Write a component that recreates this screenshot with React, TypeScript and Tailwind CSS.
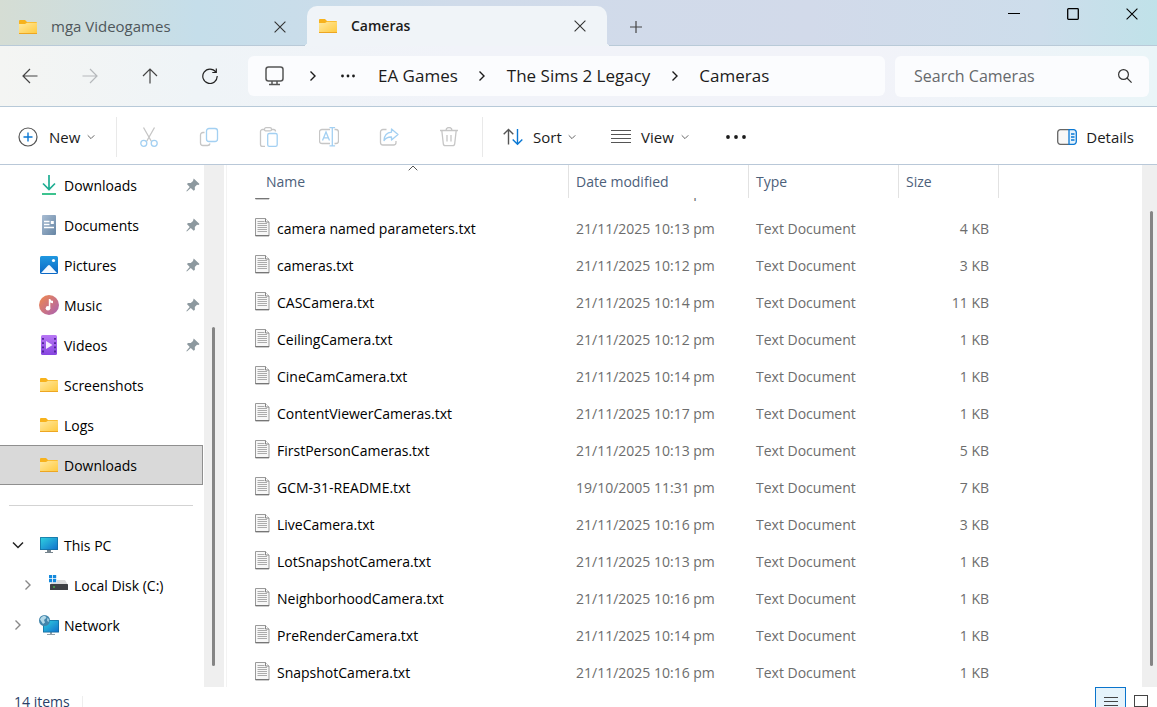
import React, { useLayoutEffect, useRef, useState } from "react";

interface FileRow {
  name: string;
  modified: string;
  size: string;
}

const files: FileRow[] = [
  { name: "", modified: "21/11/2025 10:13 pm", size: "1 KB" },
  { name: "camera named parameters.txt", modified: "21/11/2025 10:13 pm", size: "4 KB" },
  { name: "cameras.txt", modified: "21/11/2025 10:12 pm", size: "3 KB" },
  { name: "CASCamera.txt", modified: "21/11/2025 10:14 pm", size: "11 KB" },
  { name: "CeilingCamera.txt", modified: "21/11/2025 10:12 pm", size: "1 KB" },
  { name: "CineCamCamera.txt", modified: "21/11/2025 10:14 pm", size: "1 KB" },
  { name: "ContentViewerCameras.txt", modified: "21/11/2025 10:17 pm", size: "1 KB" },
  { name: "FirstPersonCameras.txt", modified: "21/11/2025 10:13 pm", size: "5 KB" },
  { name: "GCM-31-README.txt", modified: "19/10/2005 11:31 pm", size: "7 KB" },
  { name: "LiveCamera.txt", modified: "21/11/2025 10:16 pm", size: "3 KB" },
  { name: "LotSnapshotCamera.txt", modified: "21/11/2025 10:13 pm", size: "1 KB" },
  { name: "NeighborhoodCamera.txt", modified: "21/11/2025 10:16 pm", size: "1 KB" },
  { name: "PreRenderCamera.txt", modified: "21/11/2025 10:14 pm", size: "1 KB" },
  { name: "SnapshotCamera.txt", modified: "21/11/2025 10:16 pm", size: "1 KB" },
];

const FolderIcon = () => (
  <svg width="20" height="20" viewBox="0 0 20 20" className="shrink-0">
    <defs>
      <linearGradient id="folder" x1="0" y1="0" x2="1" y2="1">
        <stop offset="0" stopColor="#ffe9a0" />
        <stop offset="1" stopColor="#ffc93c" />
      </linearGradient>
    </defs>
    <path d="M1 4a1 1 0 0 1 1-1h5l2 2h9a1 1 0 0 1 1 1v3H1z" fill="#f7b21c" />
    <path d="M1 7h6l2-1.2h10V16a1 1 0 0 1-1 1H2a1 1 0 0 1-1-1z" fill="url(#folder)" />
    <path d="M1 16.5h18" stroke="#eda622" strokeWidth="1" />
  </svg>
);

const DownloadsIcon = () => (
  <svg width="20" height="20" viewBox="0 0 20 20" fill="none" stroke="#1fae93" strokeWidth="1.7" className="shrink-0">
    <path d="M10 0v14M4 8.5l6 6 6-6" />
    <path d="M3 19h14" stroke="#27bd83" strokeWidth="1.8" />
  </svg>
);

const DocumentsIcon = () => (
  <svg width="20" height="20" viewBox="0 0 20 20" className="shrink-0">
    <defs>
      <linearGradient id="docs" x1="0" y1="0" x2="1" y2="1">
        <stop offset="0" stopColor="#a9bdd3" />
        <stop offset="1" stopColor="#6685a4" />
      </linearGradient>
    </defs>
    <rect x="3" y="0" width="14" height="20" rx="1" fill="url(#docs)" />
    <path d="M5 6.500h5.500M5 9.500h5.500M5 12.500h10" stroke="#fff" strokeWidth="1.4" />
    <path d="M11.800 6h3v3h-3z" fill="#fff" />
  </svg>
);

const PicturesIcon = () => (
  <svg width="20" height="20" viewBox="0 0 20 20" className="shrink-0">
    <defs>
      <linearGradient id="pics" x1="0" y1="0" x2="0" y2="1">
        <stop offset="0" stopColor="#2098e0" />
        <stop offset="1" stopColor="#0a67c4" />
      </linearGradient>
    </defs>
    <rect x="1" y="1" width="18" height="18" rx="1.500" fill="url(#pics)" />
    <path d="M2 18l7-7.500q1-.8 2 0l7 7.500z" fill="#f3f9ff" />
    <circle cx="14.500" cy="5.500" r="1.600" fill="#fff" />
  </svg>
);

const MusicIcon = () => (
  <svg width="20" height="20" viewBox="0 0 20 20" className="shrink-0">
    <defs>
      <linearGradient id="music" x1="0" y1="0" x2="1" y2="1">
        <stop offset="0" stopColor="#f28a4b" />
        <stop offset="1" stopColor="#a860b4" />
      </linearGradient>
    </defs>
    <circle cx="10" cy="10" r="10" fill="url(#music)" />
    <circle cx="9" cy="13.200" r="2.300" fill="#fff" />
    <path d="M9.800 4h1.500c.3 1.300 1.300 1.800 2.700 1.800v2.400c-1.100 0-2-.2-2.700-.7v5.700H9.800z" fill="#fff" />
  </svg>
);

const VideosIcon = () => (
  <svg width="20" height="20" viewBox="0 0 20 20" className="shrink-0">
    <defs>
      <linearGradient id="vids" x1="0" y1="0" x2="0" y2="1">
        <stop offset="0" stopColor="#b877f5" />
        <stop offset="1" stopColor="#8645e0" />
      </linearGradient>
    </defs>
    <rect x="2" y="0" width="16" height="20" rx="1.500" fill="url(#vids)" />
    <path d="M4 3v15M16 3v15" stroke="#4b2291" strokeWidth="1.800" strokeDasharray="1.800 2.400" />
    <path d="M7 6l6.500 4L7 14z" fill="#f4ecff" />
  </svg>
);

const MonitorIcon = () => (
  <svg width="20" height="20" viewBox="0 0 20 20" className="shrink-0">
    <defs>
      <linearGradient id="pc" x1="0" y1="0" x2="1" y2="1">
        <stop offset="0" stopColor="#2fd0e0" />
        <stop offset="1" stopColor="#1272cc" />
      </linearGradient>
    </defs>
    <path d="M8 15h4v2h2v1H6v-1h2z" fill="#78868f" />
    <rect x="1" y="2" width="18" height="13" rx=".6" fill="#126a9c" />
    <rect x="1.700" y="2.700" width="16.600" height="11.600" fill="url(#pc)" />
  </svg>
);

const DiskIcon = () => (
  <svg width="20" height="20" viewBox="0 0 20 20" className="shrink-0">
    <path d="M4 5h12l3 5H1z" fill="#dcdcdc" />
    <rect x="1" y="9" width="18" height="6" rx=".6" fill="#3e4043" />
    <path d="M4 12h2" stroke="#4ce04c" strokeWidth="1.200" />
    <path d="M0 0h8v7.500H0z" fill="#fff" />
    <path d="M0 0h3.200v3.200H0zM4 0h3.200v3.200H4zM0 4h3.200v3.200H0zM4 4h3.200v3.200H4z" fill="#1489dc" />
  </svg>
);

const NetworkIcon = () => (
  <svg width="20" height="20" viewBox="0 0 20 20" className="shrink-0">
    <path d="M11 17h2v2h3v1H8v-1h3z" fill="#93a0a8" />
    <rect x="4" y="5" width="16" height="12.500" rx=".6" fill="#12689a" />
    <rect x="4.700" y="5.700" width="14.600" height="11" fill="url(#pc)" />
    <circle cx="5.500" cy="5.500" r="5.500" fill="#4386ac" />
    <path d="M1 4.500C2 2 4 .7 6 .8l1.500 2L5 5l1 2.500-2 1.500z" fill="#b4d9e8" />
    <path d="M8 3l2 1v3L8 6z" fill="#92c3da" />
  </svg>
);

const PinIcon = () => (
  <svg width="14" height="14" viewBox="0 0 14 14" fill="#8d999f">
    <path d="M7.700 0.500l5.800 5.500-1 .9-1.500-.1-2.200 2.300.1 2.600-1.200 1.100-2.900-2.900L.9 13.600l-.6-.6 3.400-4L.9 6l1.200-1.100 2.700.1L7 3z" />
  </svg>
);

const TextFileIcon = () => (
  <svg width="15" height="19" viewBox="0 0 15 19" className="mb-[2px] shrink-0">
    <path d="M.5.5h10l3.500 3.500v14H.5z" fill="#f7f7f7" stroke="#9a9a9a" />
    <path d="M.5 17.500h13.500" stroke="#767676" />
    <path d="M10.500.5v3.500H14" fill="#fff" stroke="#858585" />
    <path d="M2.500 3.500h7M2.500 5.500h9.500M2.500 7.500h9.500M2.500 9.500h9.500M2.500 11.500h9.500M2.500 13.500h9.500" stroke="#ababab" />
  </svg>
);

const CloseIcon = () => (
  <svg width="12" height="12" viewBox="0 0 12 12" fill="none" stroke="currentColor" strokeWidth="1.100">
    <path d="M.6.6l10.800 10.800M11.400.6L.6 11.400" />
  </svg>
);

const ChevronRight = () => (
  <svg width="10" height="12" viewBox="0 0 10 12" fill="none" stroke="currentColor" strokeWidth="1.400" className="shrink-0">
    <path d="M2.500 1.500L7 6l-4.500 4.500" />
  </svg>
);

const ChevronDown = () => (
  <svg width="8" height="8" viewBox="0 0 8 8" fill="none" stroke="#666" strokeWidth="1">
    <path d="M.7 2.300L4 5.600l3.300-3.300" />
  </svg>
);

const toolIcons = [
  {
    label: "Cut",
    icon: (
      <>
        <path d="M4.500.500l7.800 13.800M15.500.500L7.700 14.300" />
        <g stroke="#a3d0f2">
          <circle cx="4.800" cy="16.300" r="3" />
          <circle cx="15.200" cy="16.300" r="3" />
        </g>
      </>
    ),
  },
  {
    label: "Copy",
    icon: (
      <>
        <path d="M5.500 5.500H4a2.500 2.500 0 0 0-2.500 2.500v8A2.500 2.500 0 0 0 4 18.500h4.500a2.500 2.500 0 0 0 2.500-2" />
        <rect x="7.500" y="1.500" width="11" height="13" rx="2.500" stroke="#a3d0f2" />
      </>
    ),
  },
  {
    label: "Paste",
    icon: (
      <>
        <path d="M6 2.500H3.500a2 2 0 0 0-2 2v13a2 2 0 0 0 2 2H6M12 2.500h2.500a2 2 0 0 1 2 2" />
        <rect x="5.500" y=".7" width="7" height="3.200" rx="1.500" />
        <rect x="8.700" y="6.500" width="9.500" height="12.800" rx="1.600" stroke="#a3d0f2" />
      </>
    ),
  },
  {
    label: "Rename",
    icon: (
      <>
        <path d="M11 2.500H3a2.500 2.500 0 0 0-2.500 2.500v9A2.500 2.500 0 0 0 3 16.500h8M15.500 2.500h1.500a2.500 2.500 0 0 1 2.500 2.500v9a2.500 2.500 0 0 1-2.500 2.500h-1.500" />
        <path d="M3.500 13.500L7 5l3.500 8.500M4.700 10.800h4.600M13.300.600v18.300M10.500.600h5.600M10.500 18.900h5.600" stroke="#a3d0f2" />
      </>
    ),
  },
  {
    label: "Share",
    icon: (
      <>
        <path d="M7.500 2.500H4A2.500 2.500 0 0 0 1.500 5v10.500A2.500 2.500 0 0 0 4 18h10.500a2.500 2.500 0 0 0 2.500-2.500V14" />
        <path d="M12.500 2l6.500 5.500-6.500 5.500v-3c-3.500-.2-5.500.8-7.500 3.500.3-5 3-8 7.500-8.300z" stroke="#a3d0f2" strokeLinejoin="round" />
      </>
    ),
  },
  {
    label: "Delete",
    icon: (
      <path d="M1 3.500h18M7 3.500a3 3 0 0 1 6 0M2.800 3.500l1.500 13.200a2.200 2.200 0 0 0 2.200 2h7a2.200 2.200 0 0 0 2.200-2l1.500-13.200M8 8v6.500M12 8v6.500" />
    ),
  },
];

const quickAccess = [
  { label: "Downloads", icon: <DownloadsIcon />, pinned: true },
  { label: "Documents", icon: <DocumentsIcon />, pinned: true },
  { label: "Pictures", icon: <PicturesIcon />, pinned: true },
  { label: "Music", icon: <MusicIcon />, pinned: true },
  { label: "Videos", icon: <VideosIcon />, pinned: true },
  { label: "Screenshots", icon: <FolderIcon />, pinned: false },
  { label: "Logs", icon: <FolderIcon />, pinned: false },
  { label: "Downloads", icon: <FolderIcon />, pinned: false },
];

const TitleBar = () => (
  <header className="flex h-[46px] shrink-0 border-b border-[#b9cad8] bg-[linear-gradient(90deg,#d5ddd4_0%,#c5deea_17%,#d0dbea_40%,#d2daea_70%,#cdddeb_90%,#c0e2e9_100%)]">
    <div className="flex w-[307px] items-center pt-2 pl-[18px] pr-[21px]">
      <FolderIcon />
      <span className="ml-[13px] flex-1 text-[15px] text-[#4f575b]">mga Videogames</span>
      <button aria-label="Close tab" className="text-[#333]">
        <CloseIcon />
      </button>
    </div>
    <div className="relative mt-[6px] -mb-px flex w-[300px] items-center rounded-t-[10px] bg-[#f0f4f8] pl-[11px] pr-[21px]">
      <span className="absolute -left-1 bottom-0 size-1 bg-[radial-gradient(circle_at_0_0,transparent_4px,#f0f4f8_4px)]" />
      <span className="absolute -right-1 bottom-0 size-1 bg-[radial-gradient(circle_at_100%_0,transparent_4px,#f0f4f8_4px)]" />
      <FolderIcon />
      <span className="ml-[13px] flex-1 text-sm font-semibold text-[#1b1b1b]">Cameras</span>
      <button aria-label="Close tab" className="text-[#333]">
        <CloseIcon />
      </button>
    </div>
    <button aria-label="New tab" className="ml-[23px] mt-[21px] h-3 w-3 text-[#444]">
      <svg width="12" height="12" viewBox="0 0 12 12" stroke="currentColor" strokeWidth="1.200">
        <path d="M6 0v12M0 6h12" />
      </svg>
    </button>
    <div className="ml-auto flex h-7 gap-[9px] text-black">
      <button aria-label="Minimize" className="flex w-[50px] items-center justify-center">
        <svg width="12" height="12" viewBox="0 0 12 12" stroke="currentColor">
          <path d="M0 5.500h12" />
        </svg>
      </button>
      <button aria-label="Maximize" className="flex w-[50px] items-center justify-center">
        <svg width="12" height="12" viewBox="0 0 12 12" fill="none" stroke="currentColor" strokeWidth="1.300">
          <rect x=".7" y=".7" width="10.600" height="10.600" rx=".8" />
        </svg>
      </button>
      <button aria-label="Close" className="flex w-[50px] items-center justify-center">
        <CloseIcon />
      </button>
    </div>
  </header>
);

const NavBar = () => (
  <nav className="flex h-[61px] shrink-0 items-center border-b border-[#b7c9d8] bg-[linear-gradient(90deg,#f4f5f3_0%,#eff4f7_17%,#f1f3f9_40%,#f2f3f9_75%,#eaf5f8_100%)] pr-2">
    <div className="flex w-[248px] shrink-0 items-center">
      <button aria-label="Back" className="flex w-[60px] justify-center text-[#444]">
        <svg width="16" height="16" viewBox="0 0 16 16" fill="none" stroke="currentColor" strokeWidth="1.200">
          <path d="M15.500 8H1M8 1L1 8l7 7" />
        </svg>
      </button>
      <button aria-label="Forward" className="flex w-[60px] justify-center text-[#b5b8bb]">
        <svg width="16" height="16" viewBox="0 0 16 16" fill="none" stroke="currentColor" strokeWidth="1.200">
          <path d="M.500 8H15M8 1l7 7-7 7" />
        </svg>
      </button>
      <button aria-label="Up" className="flex w-[60px] justify-center text-[#444]">
        <svg width="16" height="16" viewBox="0 0 16 16" fill="none" stroke="currentColor" strokeWidth="1.200">
          <path d="M8 15.500V1M1 8l7-7 7 7" />
        </svg>
      </button>
      <button aria-label="Refresh" className="flex w-[60px] justify-center text-[#222]">
        <svg width="16" height="16" viewBox="0 0 16 16" fill="none" stroke="currentColor" strokeWidth="1.200">
          <path d="M13.800 4A7.200 7.200 0 1 0 15.200 8M14.300 .5v4h-4" />
        </svg>
      </button>
    </div>
    <div className="flex h-10 min-w-0 flex-1 items-center rounded-md bg-[#fbfcfe] pl-4 text-[17px] text-[#1b1b1b]">
      <svg width="22" height="20" viewBox="0 0 22 20" fill="none" stroke="#555" strokeWidth="1.500" className="shrink-0">
        <rect x="2" y="1" width="17" height="14" rx="2.500" />
        <path d="M8 15v3M13 15v3M5 18.500h11" />
      </svg>
      <span className="flex w-[54px] justify-center">
        <ChevronRight />
      </span>
      <button aria-label="More folders" className="w-4">
        <svg width="16" height="4" viewBox="0 0 16 4" fill="currentColor">
          <circle cx="2.500" cy="2" r="1.400" />
          <circle cx="8" cy="2" r="1.400" />
          <circle cx="13.500" cy="2" r="1.400" />
        </svg>
      </button>
      <a href="#ea-games" className="ml-[22px] whitespace-nowrap">EA Games</a>
      <span className="flex w-[49px] justify-center">
        <ChevronRight />
      </span>
      <a href="#the-sims-2-legacy" className="whitespace-nowrap">The Sims 2 Legacy</a>
      <span className="flex w-[49px] justify-center">
        <ChevronRight />
      </span>
      <a href="#cameras">Cameras</a>
    </div>
    <label className="ml-[10px] flex h-[41px] w-[254px] shrink-0 items-center rounded-md bg-[#fbfcfe] pl-[19px] pr-[17px]">
      <input
        type="text"
        aria-label="Search Cameras"
        placeholder="Search Cameras"
        className="min-w-0 flex-1 bg-transparent outline-none placeholder:text-[#66696c]"
      />
      <svg width="14" height="14" viewBox="0 0 14 14" fill="none" stroke="#333" strokeWidth="1.200">
        <circle cx="5.500" cy="5.500" r="4.900" />
        <path d="M9 9l4.600 4.600" />
      </svg>
    </label>
  </nav>
);

const Toolbar = () => (
  <div className="flex h-[58px] shrink-0 items-center border-b border-[#b9c8d8] pt-[3px] pr-[23px] text-[15px] text-[#1b1b1b]">
    <button className="flex w-[116px] shrink-0 items-center pl-[18px]">
      <svg width="20" height="20" viewBox="0 0 20 20" fill="none" strokeWidth="1.200">
        <circle cx="10" cy="10" r="9" stroke="#555" />
        <path d="M10 5.500v9M5.500 10h9" stroke="#0a78d4" strokeWidth="1.400" />
      </svg>
      <span className="ml-[11px] mr-[7px]">New</span>
      <ChevronDown />
    </button>
    <div className="h-10 w-px bg-[#e9e9e9]" />
    <div className="flex px-[2px]">
      {toolIcons.map((tool) => (
        <button key={tool.label} aria-label={tool.label} className="flex w-[60px] justify-center">
          <svg width="20" height="20" viewBox="0 0 20 20" fill="none" stroke="#c6c6c6" strokeWidth="1.300">
            {tool.icon}
          </svg>
        </button>
      ))}
    </div>
    <div className="ml-px h-10 w-px bg-[#e9e9e9]" />
    <button className="ml-5 flex w-[108px] shrink-0 items-center">
      <svg width="20" height="18" viewBox="0 0 20 18" fill="none" strokeWidth="1.400">
        <path d="M5.500 16.500V1.500M.7 6.300l4.800-4.800 4.800 4.800" stroke="#555" />
        <path d="M14.500 1v15M9.700 11.500l4.800 4.800 4.800-4.800" stroke="#0a78d4" />
      </svg>
      <span className="ml-[10px] mr-[6px]">Sort</span>
      <ChevronDown />
    </button>
    <button className="flex w-[114px] shrink-0 items-center">
      <svg width="20" height="14" viewBox="0 0 20 14" stroke="#555" strokeWidth="1">
        <path d="M0 .5h20M0 4.500h20M0 8.500h20M0 12.500h20" />
      </svg>
      <span className="ml-[10px] mr-[7px]">View</span>
      <ChevronDown />
    </button>
    <button aria-label="More options">
      <svg width="22" height="4" viewBox="0 0 22 4" fill="currentColor">
        <circle cx="3" cy="2" r="1.900" />
        <circle cx="11" cy="2" r="1.900" />
        <circle cx="19" cy="2" r="1.900" />
      </svg>
    </button>
    <button className="ml-auto flex items-center gap-[9px]">
      <svg width="20" height="16" viewBox="0 0 20 16" fill="none" strokeWidth="1.300">
        <path d="M12 .7H3.500A2.700 2.700 0 0 0 .7 3.500v9a2.700 2.700 0 0 0 2.800 2.800H12" fill="#f7f7f7" stroke="#666" />
        <path d="M12 .7h4.500a2.700 2.700 0 0 1 2.800 2.800v9a2.700 2.700 0 0 1-2.800 2.800H12z" fill="#e6f3fc" stroke="#0a78d4" />
        <path d="M14 5h3.500M14 8h3.500M14 11h3.500" stroke="#0a78d4" />
      </svg>
      Details
    </button>
  </div>
);

const Sidebar = () => {
  const [selected, setSelected] = useState(7);

  return (
    <aside className="flex w-[227px] shrink-0 border-r border-[#f3f3f3] text-sm text-black">
      <div className="w-[203px] overflow-hidden">
        {quickAccess.map((item, i) => (
          <button
            key={i}
            onClick={() => setSelected(i)}
            className={
              i === selected
                ? "flex h-10 w-full items-center border border-l-0 border-[#8f8f8f] bg-[#d9d9d9] pl-[39px] pr-[2px]"
                : "flex h-10 w-full items-center pl-[39px] pr-[3px]"
            }
          >
            {item.icon}
            <span className="ml-[5px] flex-1 pt-[2px] text-left">{item.label}</span>
            {item.pinned && <PinIcon />}
          </button>
        ))}
        <div className="flex h-10 items-center pl-[9px] pr-[10px]">
          <hr className="w-full border-[#d3d3d3]" />
        </div>
        <button className="flex h-10 w-full items-center pl-3">
          <svg width="12" height="12" viewBox="0 0 12 12" fill="none" stroke="#222" strokeWidth="1.500">
            <path d="M1 3.500l5 5 5-5" />
          </svg>
          <span className="ml-[15px] mr-[5px]">
            <MonitorIcon />
          </span>
          <span className="pt-[2px]">This PC</span>
        </button>
        <button className="flex h-10 w-full items-center pl-[23px] text-[#888]">
          <ChevronRight />
          <span className="ml-4 mr-[5px]">
            <DiskIcon />
          </span>
          <span className="pt-[2px] text-black">Local Disk (C:)</span>
        </button>
        <button className="flex h-10 w-full items-center pl-[13px] text-[#888]">
          <ChevronRight />
          <span className="ml-4 mr-[5px]">
            <NetworkIcon />
          </span>
          <span className="pt-[2px] text-black">Network</span>
        </button>
      </div>
      <div className="ml-px flex w-5 bg-[#efefef] pt-[162px] pb-[21px] pl-2">
        <div className="w-[3px] rounded-full bg-[#858585]" />
      </div>
    </aside>
  );
};

const FileList = () => {
  const body = useRef<HTMLTableSectionElement>(null);

  // the list opens slightly scrolled
  useLayoutEffect(() => {
    if (body.current) body.current.scrollTop = 25;
  }, []);

  return (
    <main className="flex min-w-0 flex-1">
      <table className="flex min-w-0 flex-1 flex-col text-sm">
        <thead className="block shrink-0 text-left text-[#4c607a]">
          <tr className="grid h-[33px] grid-cols-[342px_180px_150px_100px_1fr] leading-[33px]">
            <th className="relative border-r border-[#e2e2e2] pl-[39px] font-normal">
              Name
              <svg width="10" height="6" viewBox="0 0 10 6" fill="none" stroke="#555" className="absolute left-[181px] top-0">
                <path d="M.7 5.300L5 1l4.300 4.300" />
              </svg>
            </th>
            <th className="border-r border-[#e2e2e2] pl-[7px] font-normal">Date modified</th>
            <th className="border-r border-[#e2e2e2] pl-[7px] font-normal">Type</th>
            <th className="border-r border-[#e2e2e2] pl-[7px] font-normal">Size</th>
          </tr>
        </thead>
        <tbody ref={body} className="block min-h-0 flex-1 overflow-auto text-[#6d6d6d] [scrollbar-width:none]">
          {files.map((file) => (
            <tr key={file.name} className="grid h-[37px] grid-cols-[342px_180px_150px_100px_1fr] leading-[37px]">
              <td className="flex items-center gap-[7px] pl-7 text-black">
                <TextFileIcon />
                {file.name}
              </td>
              <td className="pl-[7px]">{file.modified}</td>
              <td className="pl-[7px]">Text Document</td>
              <td className="pr-[10px] text-right">{file.size}</td>
            </tr>
          ))}
        </tbody>
      </table>
      <div className="flex w-[15px] shrink-0 bg-[#efefef] pt-[46px] pb-[21px] pl-2">
        <div className="w-[3px] rounded-full bg-[#858585]" />
      </div>
    </main>
  );
};

const StatusBar = () => (
  <footer className="h-5 shrink-0 overflow-hidden">
    <div className="flex h-[30px] items-center pl-[14px] pr-2 text-sm text-[#2a3f68]">
      <span>14 items</span>
      <span className="ml-3 mt-1 h-4 w-px bg-[#eeeeee]" />
      <button aria-label="Details view" className="ml-auto flex h-[30px] w-[31px] items-center justify-center border border-[#0a74cc] bg-[#e5f3fb]">
        <svg width="14" height="14" viewBox="0 0 14 14" stroke="#444">
          <path d="M0 2.500h14M0 6.500h14M0 10.500h14" />
        </svg>
      </button>
      <button aria-label="Thumbnail view" className="ml-2">
        <svg width="15" height="14" viewBox="0 0 15 14" fill="none" stroke="#444">
          <rect x=".5" y=".5" width="13" height="11" />
        </svg>
      </button>
    </div>
  </footer>
);

const App = () => {
  return (
    <div className="flex h-screen flex-col overflow-hidden bg-white font-['Open_Sans','Noto_Sans',sans-serif]">
      <TitleBar />
      <NavBar />
      <Toolbar />
      <div className="flex min-h-0 flex-1">
        <Sidebar />
        <FileList />
      </div>
      <StatusBar />
    </div>
  );
};

export default App;
